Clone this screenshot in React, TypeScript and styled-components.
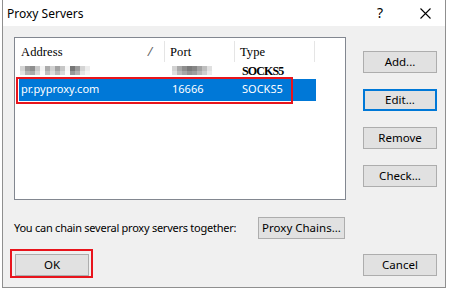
import React from 'react';
import styled, { createGlobalStyle } from 'styled-components';

const Global = createGlobalStyle`
  html, body { margin: 0; padding: 0; background: #ffffff; }
  body {
    width: 450px; height: 290px; overflow: hidden;
    font-family: "Noto Sans", "Liberation Sans", sans-serif;
    font-size: 11px; color: #000;
  }
  #root { width: 450px; height: 290px; }
`;

const Window = styled.div`
  margin-left: 2px;
  width: 444px;
  height: 288px;
  box-sizing: border-box;
  border: 1px solid #8f8f8f;
  border-top: none;
  display: flex;
  flex-direction: column;
  background: #f0f0f0;
`;

const TitleBar = styled.div`
  height: 26px;
  flex: none;
  background: #ffffff;
  display: flex;
  align-items: center;
  padding-left: 4px;
`;

const Title = styled.div`
  flex: 1;
  font-size: 12px;
`;

const HelpGlyph = styled.span`
  font-size: 14px;
  margin-right: 37px;
  line-height: 1;
`;

const CloseGlyph = styled.svg`
  width: 11px;
  height: 11px;
  margin-right: 14px;
  display: block;
`;

const Body = styled.div`
  flex: 1;
  display: flex;
  flex-direction: column;
  padding: 11px 8px 0 11px;
`;

const TopRow = styled.div`
  display: flex;
  align-items: flex-start;
`;

const List = styled.div`
  position: relative;
  width: 332px;
  height: 163px;
  box-sizing: border-box;
  border: 1px solid #828790;
  background: #ffffff;
`;

const Header = styled.div`
  display: flex;
  height: 24px;
  font-family: "Liberation Serif", serif;
  font-size: 12.5px;
  letter-spacing: 0.1px;
`;

const HeaderCell = styled.div<{ $w?: number }>`
  ${(p) => (p.$w ? `width: ${p.$w}px;` : 'flex: 1;')}
  flex-shrink: 0;
  box-sizing: border-box;
  display: flex;
  align-items: center;
  justify-content: space-between;
  padding: 2px 10px 0 ${(p) => (p.$w === 150 ? 6 : 5)}px;
  border-right: ${(p) => (p.$w ? '1px solid #e5e5e5' : 'none')};
  margin: 3px 0 0;
`;

const SortMark = styled.span`
  color: #666;
  font-family: "Liberation Mono", monospace;
`;

const Row = styled.div<{ $selected?: boolean; $h: number }>`
  display: flex;
  margin-left: 4px;
  width: 297px;
  height: ${(p) => p.$h}px;
  align-items: center;
  background: ${(p) => (p.$selected ? '#0078d7' : 'transparent')};
  color: ${(p) => (p.$selected ? '#ffffff' : '#000')};
  box-sizing: border-box;
  padding-bottom: ${(p) => (p.$selected ? 3 : 0)}px;
`;

const Cell = styled.div<{ $w: number; $pl: number }>`
  width: ${(p) => p.$w}px;
  padding-left: ${(p) => p.$pl}px;
  box-sizing: border-box;
  flex-shrink: 0;
  white-space: nowrap;
  display: flex;
  align-items: center;
`;

const BoldSerif = styled.span`
  font-family: "Liberation Serif", serif;
  font-weight: bold;
  font-size: 12px;
  letter-spacing: -0.9px;
  padding-top: 1px;
`;

const Mosaic = styled.div`
  display: flex;
  flex-direction: column;
  filter: blur(0.3px);
`;

const MosaicRow = styled.div`
  display: flex;
`;

const Pixel = styled.div<{ $shade: string }>`
  width: 5px;
  height: 4.5px;
  background: ${(p) => p.$shade};
`;

const RowFrame = styled.div`
  position: absolute;
  left: 1px;
  top: 39px;
  width: 277px;
  height: 27px;
  box-sizing: border-box;
  border: 2px solid #e8141c;
  pointer-events: none;
`;

const ButtonColumn = styled.div`
  display: flex;
  flex-direction: column;
  gap: 16px;
  margin-left: 17px;
  padding-top: 14px;
`;

const Button = styled.button<{ $w?: number; $focused?: boolean }>`
  width: ${(p) => p.$w ?? 74}px;
  height: 22px;
  box-sizing: border-box;
  background: #e1e1e1;
  border: 1px solid ${(p) => (p.$focused ? '#0078d7' : '#adadad')};
  box-shadow: ${(p) => (p.$focused ? 'inset 0 0 0 1px #0078d7' : 'none')};
  font-family: "Noto Sans", "Liberation Sans", sans-serif;
  font-size: 11.5px;
  color: #000;
  padding: 0 0 1px;
  margin: 0;
  line-height: 1;
  white-space: nowrap;
  display: flex;
  align-items: center;
  justify-content: center;
`;

const ChainRow = styled.div`
  display: flex;
  align-items: center;
  margin-top: 17px;
`;

const ChainLabel = styled.div`
  width: 244px;
  flex: none;
  white-space: nowrap;
  letter-spacing: -0.25px;
  padding-bottom: 1px;
`;

const BottomRow = styled.div`
  display: flex;
  justify-content: space-between;
  align-items: center;
  margin-top: 15px;
`;

const Highlighted = styled.div`
  position: relative;
  margin-left: 1px;
  &::after {
    content: '';
    position: absolute;
    inset: -5px -4px -2px -5px;
    border: 2px solid #e8141c;
    pointer-events: none;
  }
`;

const addrMosaic = [
  ['#d4d4d4', '#9c9c9c', '#8e8e8e', '#c8c8c8', '#f4f4f4', '#acacac', '#d0d0d0', '#a2a2a2', '#c6c6c6', '#f6f6f6', '#767676', '#9a9a9a', '#d4d4d4', '#ececec', '#ffffff'],
  ['#e2e2e2', '#b4b4b4', '#aaaaaa', '#d8d8d8', '#fafafa', '#c0c0c0', '#dcdcdc', '#bababa', '#d8d8d8', '#fafafa', '#989898', '#b2b2b2', '#e4e4e4', '#f4f4f4', '#ffffff'],
];
const portMosaic = [
  ['#d2d2d2', '#a8a8a8', '#8e8e8e', '#7a7a7a', '#868686', '#a2a2a2', '#bebebe', '#e0e0e0'],
  ['#dedede', '#bababa', '#a6a6a6', '#949494', '#9e9e9e', '#b6b6b6', '#cecece', '#eaeaea'],
];

function Blur({ data }: { data: string[][] }) {
  return (
    <Mosaic>
      {data.map((r, i) => (
        <MosaicRow key={i}>
          {r.map((c, j) => (
            <Pixel key={j} $shade={c} />
          ))}
        </MosaicRow>
      ))}
    </Mosaic>
  );
}

export default function App() {
  return (
    <>
      <Global />
      <Window>
        <TitleBar>
          <Title>Proxy Servers</Title>
          <HelpGlyph>?</HelpGlyph>
          <CloseGlyph viewBox="0 0 11 11">
            <path d="M0.5 0.5 L10.5 10.5 M10.5 0.5 L0.5 10.5" stroke="#000" strokeWidth="1.1" fill="none" />
          </CloseGlyph>
        </TitleBar>
        <Body>
          <TopRow>
            <List>
              <Header>
                <HeaderCell $w={150}>
                  <span>Address</span>
                  <SortMark>/</SortMark>
                </HeaderCell>
                <HeaderCell $w={70}>Port</HeaderCell>
                <HeaderCell $w={80}>Type</HeaderCell>
                <HeaderCell />
              </Header>
              <Row $h={17}>
                <Cell $w={147} $pl={1}>
                  <Blur data={addrMosaic} />
                </Cell>
                <Cell $w={70} $pl={6}>
                  <Blur data={portMosaic} />
                </Cell>
                <Cell $w={80} $pl={6}>
                  <BoldSerif>SOCKS5</BoldSerif>
                </Cell>
              </Row>
              <Row $h={22} $selected>
                <Cell $w={147} $pl={2}>pr.pyproxy.com</Cell>
                <Cell $w={70} $pl={6}>16666</Cell>
                <Cell $w={80} $pl={6}>SOCKS5</Cell>
              </Row>
              <RowFrame />
            </List>
            <ButtonColumn>
              <Button>Add...</Button>
              <Button $focused>Edit...</Button>
              <Button>Remove</Button>
              <Button>Check...</Button>
            </ButtonColumn>
          </TopRow>
          <ChainRow>
            <ChainLabel>You can chain several proxy servers together:</ChainLabel>
            <Button $w={87}>Proxy Chains...</Button>
          </ChainRow>
          <BottomRow>
            <Highlighted>
              <Button>OK</Button>
            </Highlighted>
            <Button>Cancel</Button>
          </BottomRow>
        </Body>
      </Window>
    </>
  );
}
